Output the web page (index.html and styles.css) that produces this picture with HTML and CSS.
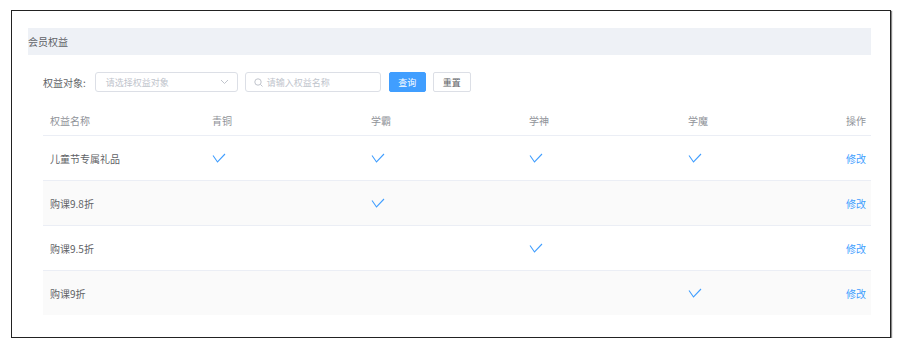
FILE: index.html
```html
<!DOCTYPE html>
<html>

<head>
  <title>会员权益</title>
  <link rel="stylesheet" href="styles.css">
</head>

<body>
  <div class="frame">
    <div class="section-title">会员权益</div>

    <div class="content">
      <!-- filter bar -->
      <div class="filter">
        <span class="filter-label">权益对象:</span>
        <div class="select">
          <span class="placeholder">请选择权益对象</span>
          <svg class="chevron" width="9" height="6" viewBox="0 0 9 6">
            <polyline points="1,1 4.5,4.5 8,1" fill="none" stroke="#c0c4cc" stroke-width="1"/>
          </svg>
        </div>
        <div class="search">
          <svg class="search-icon" width="9" height="9" viewBox="0 0 9 9">
            <circle cx="4" cy="4" r="3.2" fill="none" stroke="#c0c4cc" stroke-width="1"/>
            <line x1="6.4" y1="6.4" x2="8.5" y2="8.5" stroke="#c0c4cc" stroke-width="1"/>
          </svg>
          <span class="placeholder">请输入权益名称</span>
        </div>
        <button class="btn btn-primary">查询</button>
        <button class="btn">重置</button>
      </div>

      <table class="rights-table">
        <colgroup>
          <col style="width: 162px;">
          <col style="width: 159px;">
          <col style="width: 158px;">
          <col style="width: 159px;">
          <col style="width: 159px;">
          <col>
        </colgroup>
        <thead>
          <tr>
            <th>权益名称</th>
            <th>青铜</th>
            <th>学霸</th>
            <th>学神</th>
            <th>学魔</th>
            <th class="op">操作</th>
          </tr>
        </thead>
        <tbody id="tableBody">
          <!-- rows are generated below -->
        </tbody>
      </table>
    </div>
  </div>

  <script>
    // Rights data: which levels have each right
    const rights = [
      { name: "儿童节专属礼品", levels: [true, true, true, true] },
      { name: "购课9.8折", levels: [false, true, false, false] },
      { name: "购课9.5折", levels: [false, false, true, false] },
      { name: "购课9折", levels: [false, false, false, true] }
    ];

    const check = '<svg class="check" width="14" height="11" viewBox="0 0 14 11">' +
      '<polyline points="1,2.5 5.5,9 13,1" fill="none" stroke="#409eff" stroke-width="1.1"/></svg>';

    const tableBody = document.getElementById("tableBody");
    rights.forEach((item) => {
      const row = document.createElement("tr");
      let cells = `<td>${item.name}</td>`;
      item.levels.forEach((has) => {
        cells += `<td>${has ? check : ""}</td>`;
      });
      cells += `<td class="op"><a href="#">修改</a></td>`;
      row.innerHTML = cells;
      tableBody.appendChild(row);
    });
  </script>
</body>

</html>
```

FILE: styles.css
```css
/* Reset default margin and padding for body */
body {
  margin: 0;
  padding: 0;
  font-family: "Noto Sans CJK SC", "Noto Sans", sans-serif;
  background-color: #fff;
}

/* Outer frame */
.frame {
  width: 880px;
  height: 328px;
  margin: 10px 0 0 11px;
  border: 1px solid #222;
  box-shadow: 1px 1px 1px #888;
  padding: 17px 19px 0 16px;
  box-sizing: border-box;
}

/* Section title bar */
.section-title {
  height: 27px;
  line-height: 27px;
  background-color: #eef1f6;
  color: #606266;
  font-size: 10px;
}

.content {
  padding-left: 15px;
}

/* Filter bar */
.filter {
  display: flex;
  align-items: center;
  margin-top: 17px;
  height: 20px;
}

.filter-label {
  font-size: 10px;
  color: #606266;
  margin-right: 9px;
}

.select,
.search {
  height: 20px;
  box-sizing: border-box;
  border: 1px solid #dcdfe6;
  border-radius: 3px;
  display: flex;
  align-items: center;
  font-size: 9px;
}

.select {
  width: 143px;
  padding: 0 8px 0 10px;
  justify-content: space-between;
  margin-right: 7px;
}

.search {
  width: 136px;
  padding-left: 8px;
  margin-right: 8px;
}

.search-icon {
  margin-right: 4px;
}

.placeholder {
  color: #c0c4cc;
}

/* Buttons */
.btn {
  height: 20px;
  width: 38px;
  padding: 0;
  font-family: inherit;
  font-size: 9px;
  color: #606266;
  background-color: #fff;
  border: 1px solid #dcdfe6;
  border-radius: 2px;
  margin-right: 7px;
}

.btn-primary {
  width: 37px;
  background-color: #409eff;
  border-color: #409eff;
  color: #fff;
}

/* Table */
.rights-table {
  width: 828px;
  margin-top: 13px;
  border-collapse: collapse;
  table-layout: fixed;
  font-size: 10px;
}

.rights-table th {
  height: 30px;
  font-weight: normal;
  color: #909399;
  text-align: left;
  padding: 0 0 0 7px;
  border-bottom: 1px solid #ebeef5;
}

.rights-table td {
  height: 44px;
  color: #606266;
  padding: 0 0 0 7px;
  border-bottom: 1px solid #ebeef5;
}

.rights-table tbody tr:nth-child(even) {
  background-color: #fafafa;
}

.rights-table tbody tr:last-child td {
  border-bottom: none;
}

.rights-table .op {
  text-align: right;
  white-space: nowrap;
  padding: 0 5px 0 0;
}

.check {
  display: block;
}

a {
  color: #409eff;
  text-decoration: none;
}
```
